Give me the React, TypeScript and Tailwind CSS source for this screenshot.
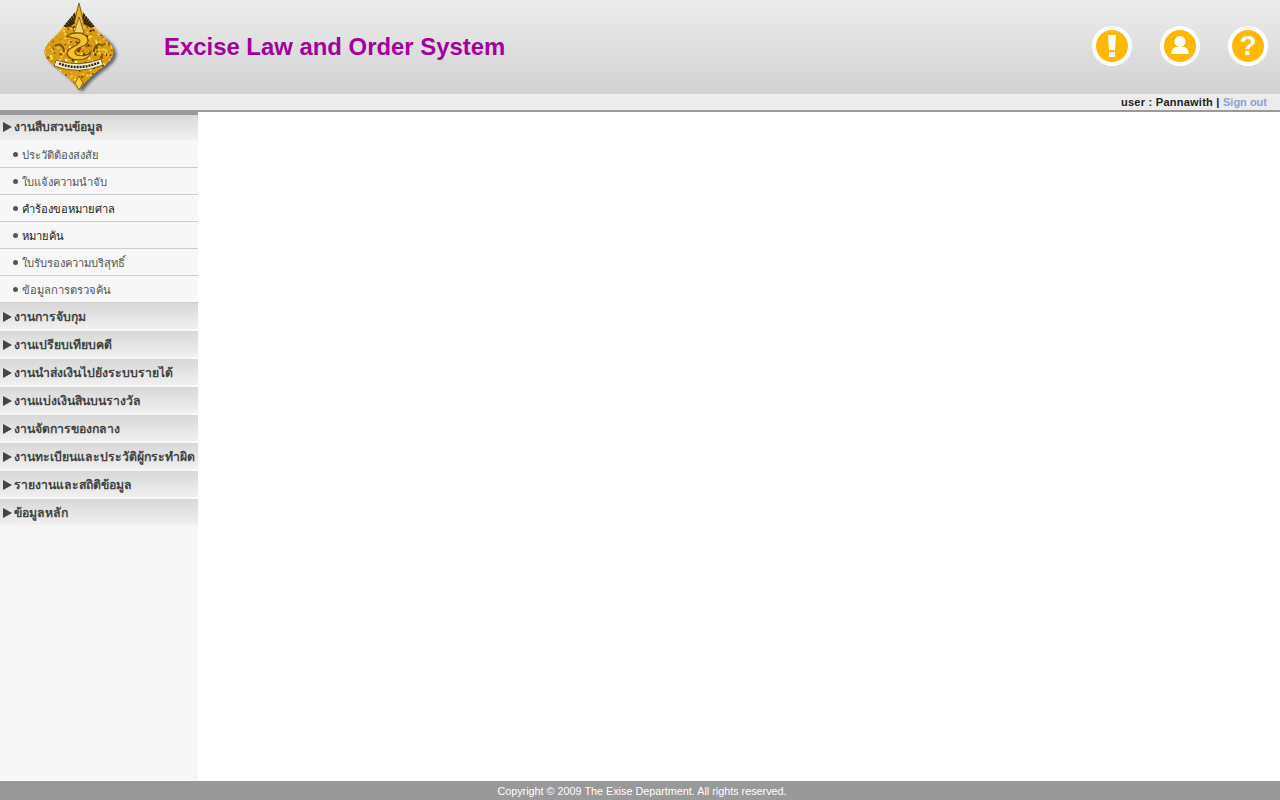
import { ReactNode } from "react";

const subItems = [
  { label: "ประวัติต้องสงสัย", dark: false },
  { label: "ใบแจ้งความนำจับ", dark: false },
  { label: "คำร้องขอหมายศาล", dark: true },
  { label: "หมายค้น", dark: true },
  { label: "ใบรับรองความบริสุทธิ์", dark: false },
  { label: "ข้อมูลการตรวจค้น", dark: false },
];

const groups = [
  "งานการจับกุม",
  "งานเปรียบเทียบคดี",
  "งานนำส่งเงินไปยังระบบรายได้",
  "งานแบ่งเงินสินบนรางวัล",
  "งานจัดการของกลาง",
  "งานทะเบียนและประวัติผู้กระทำผิด",
  "รายงานและสถิติข้อมูล",
  "ข้อมูลหลัก",
];

// speckle for the gold emblem, fixed hash so it never changes between runs
const hash = (n: number) => {
  const v = Math.sin(n * 12.9898) * 43758.5453;
  return v - Math.floor(v);
};
const speckColors = ["#fbe04a", "#f2c52e", "#e3a512", "#c98a0c", "#8a5a08", "#fff2a8", "#4f3205", "#f2c52e"];
const specks = Array.from({ length: 520 }, (_, i) => ({
  x: 4 + hash(i + 1) * 74,
  y: 22 + hash(i + 500) * 69,
  s: 1 + hash(i + 900) * 1.4,
  c: speckColors[Math.floor(hash(i + 1300) * speckColors.length)],
}));

const BODY =
  "M41 22 C52 26 64 34 71 42 C76 48 77 54 73 59 C68 66 60 70 55 75 C50 79 46 84 41 90 C36 84 32 79 27 75 C22 70 14 66 9 59 C5 54 6 48 11 42 C18 34 30 26 41 22 Z";
const FAN = "M41 3 L44 11 L68 40 L14 40 L38 11 Z";

function Emblem() {
  const rays = [-66, -56, -46, -36, -26, -16, 16, 26, 36, 46, 56, 66];
  return (
    <svg width="84" height="94" viewBox="0 0 84 94">
      <defs>
        <filter id="soft" x="-20%" y="-20%" width="140%" height="140%">
          <feGaussianBlur stdDeviation="1.600" />
        </filter>
        <clipPath id="body">
          <path d={BODY} />
        </clipPath>
        <clipPath id="fan">
          <path d={FAN} />
        </clipPath>
      </defs>
      <path d={BODY} fill="#333" opacity="0.7" filter="url(#soft)" transform="translate(3 2)" />
      <g clipPath="url(#fan)">
        <rect x="10" y="0" width="62" height="42" fill="#e8bd3a" />
        {rays.map((a) => (
          <rect key={a} x="40" y="-6" width="2.200" height="36" fill="#2e2208" transform={`rotate(${a} 41 32)`} />
        ))}
      </g>
      <path d="M41 3 L46 24 L36 24 Z" fill="#e4b43a" stroke="#5a3c06" strokeWidth="0.700" />
      <path d={BODY} fill="#d99c12" />
      <g clipPath="url(#body)">
        {specks.map((s, i) => (
          <rect key={i} x={s.x} y={s.y} width={s.s} height={s.s} fill={s.c} />
        ))}
      </g>
      <path d="M41 17 L46 33 L36 33 Z" fill="#f3d468" stroke="#6b4706" strokeWidth="0.700" />
      <path
        d="M29 36 C36 31 50 32 50 41 C50 47 37 47 37 52 C37 57 48 57 53 52 C51 62 31 62 29 54 C28 47 42 46 42 41 C42 37 34 39 29 36 Z"
        fill="#f2c52e"
        stroke="#7a4e06"
        strokeWidth="1.200"
      />
      <path d="M17 46 C21 42 26 46 26 52 M65 46 C61 42 56 46 56 52" fill="none" stroke="#7a4e06" strokeWidth="1.800" />
      <path d="M18 60 Q41 68 63 59 L65 65 Q41 75 16 66 Z" fill="#f6f0d6" stroke="#4f3205" strokeWidth="0.700" />
      <path d="M21 63.500 Q41 71 61 62.500" fill="none" stroke="#2e2208" strokeWidth="2.400" strokeDasharray="2 1" />
      <path d="M41 76 L45 83 L41 90 L37 83 Z" fill="#f7d23e" stroke="#6b4706" strokeWidth="0.700" />
    </svg>
  );
}

function RoundIcon({ children }: { children: ReactNode }) {
  return (
    <div className="w-10 h-10 rounded-full bg-white flex items-center justify-center">
      <div className="w-8 h-8 rounded-full bg-[#ffb900] flex items-center justify-center">{children}</div>
    </div>
  );
}

function MenuHeader({ label, h }: { label: string; h: string }) {
  return (
    <div className={`${h} flex items-center pl-[3px] bg-gradient-to-b from-[#d8d8d8] to-[#f0f0f0]`}>
      <span className="w-0 h-0 mb-px border-y-[5px] border-y-transparent border-l-[9px] border-l-[#444] mr-[2px]" />
      <span className="text-[12.250px] font-bold text-[#444] whitespace-nowrap">{label}</span>
    </div>
  );
}

export default function App() {
  return (
    <div className="h-[800px] flex flex-col bg-white overflow-hidden font-['Liberation_Sans','Noto_Sans',sans-serif]">
      <header className="h-[94px] shrink-0 flex items-center bg-gradient-to-b from-[#ececec] to-[#d2d2d2]">
        <div className="w-[164px] pl-[38px] shrink-0">
          <Emblem />
        </div>
        <h1 className="text-[23.900px] font-bold text-[#a0009c]">Excise Law and Order System</h1>
        <div className="ml-auto mr-3 mb-[2px] flex gap-[28px]">
          <RoundIcon>
            <svg width="8" height="22" viewBox="0 0 8 22">
              <path d="M0 0h8l-1 15H1zM1 17h6v5H1z" fill="#fff" />
            </svg>
          </RoundIcon>
          <RoundIcon>
            <svg width="18" height="20" viewBox="0 0 18 20">
              <circle cx="9" cy="5.500" r="5.500" fill="#fff" />
              <path d="M0.500 18v-2c0-3 3-5 5-5h7c2 0 5 2 5 5v2z" fill="#fff" />
            </svg>
          </RoundIcon>
          <RoundIcon>
            <span className="text-[28px] leading-none font-bold text-white">?</span>
          </RoundIcon>
        </div>
      </header>

      <div className="h-[18px] shrink-0 flex items-center justify-end pr-[13px] bg-[#ececec] border-b-2 border-[#999] text-[11px] font-bold text-[#222]">
        <span className="tracking-[0.25px]">user : Pannawith |&nbsp;</span>
        <span className="text-[#8aa2cc]">Sign out</span>
      </div>

      <div className="flex-1 flex min-h-0">
        <aside className="w-[198px] shrink-0 bg-[#f7f7f7]">
          <div className="h-[3px] bg-[#999]" />
          <MenuHeader label="งานสืบสวนข้อมูล" h="h-[25px]" />
          <div className="pt-px">
            {subItems.map((item) => (
              <div
                key={item.label}
                className={`h-[27px] flex items-center pt-[2px] pl-[13px] gap-[4px] border-b border-[#ccc] text-[11.200px] ${item.dark ? "text-[#222]" : "text-[#555]"}`}
              >
                <span className="w-[5px] h-[5px] mb-[2px] rounded-full bg-[#555]" />
                <span>{item.label}</span>
              </div>
            ))}
          </div>
          <div className="flex flex-col gap-[2px]">
            {groups.map((g) => (
              <MenuHeader key={g} label={g} h="h-[26px] pt-[2px]" />
            ))}
          </div>
        </aside>
        <main className="flex-1 bg-white" />
      </div>

      <footer className="h-[19px] shrink-0 flex items-center justify-center pt-[2px] pl-[4px] bg-[#999] text-[10.800px] text-white">
        Copyright © 2009 The Exise Department. All rights reserved.
      </footer>
    </div>
  );
}
